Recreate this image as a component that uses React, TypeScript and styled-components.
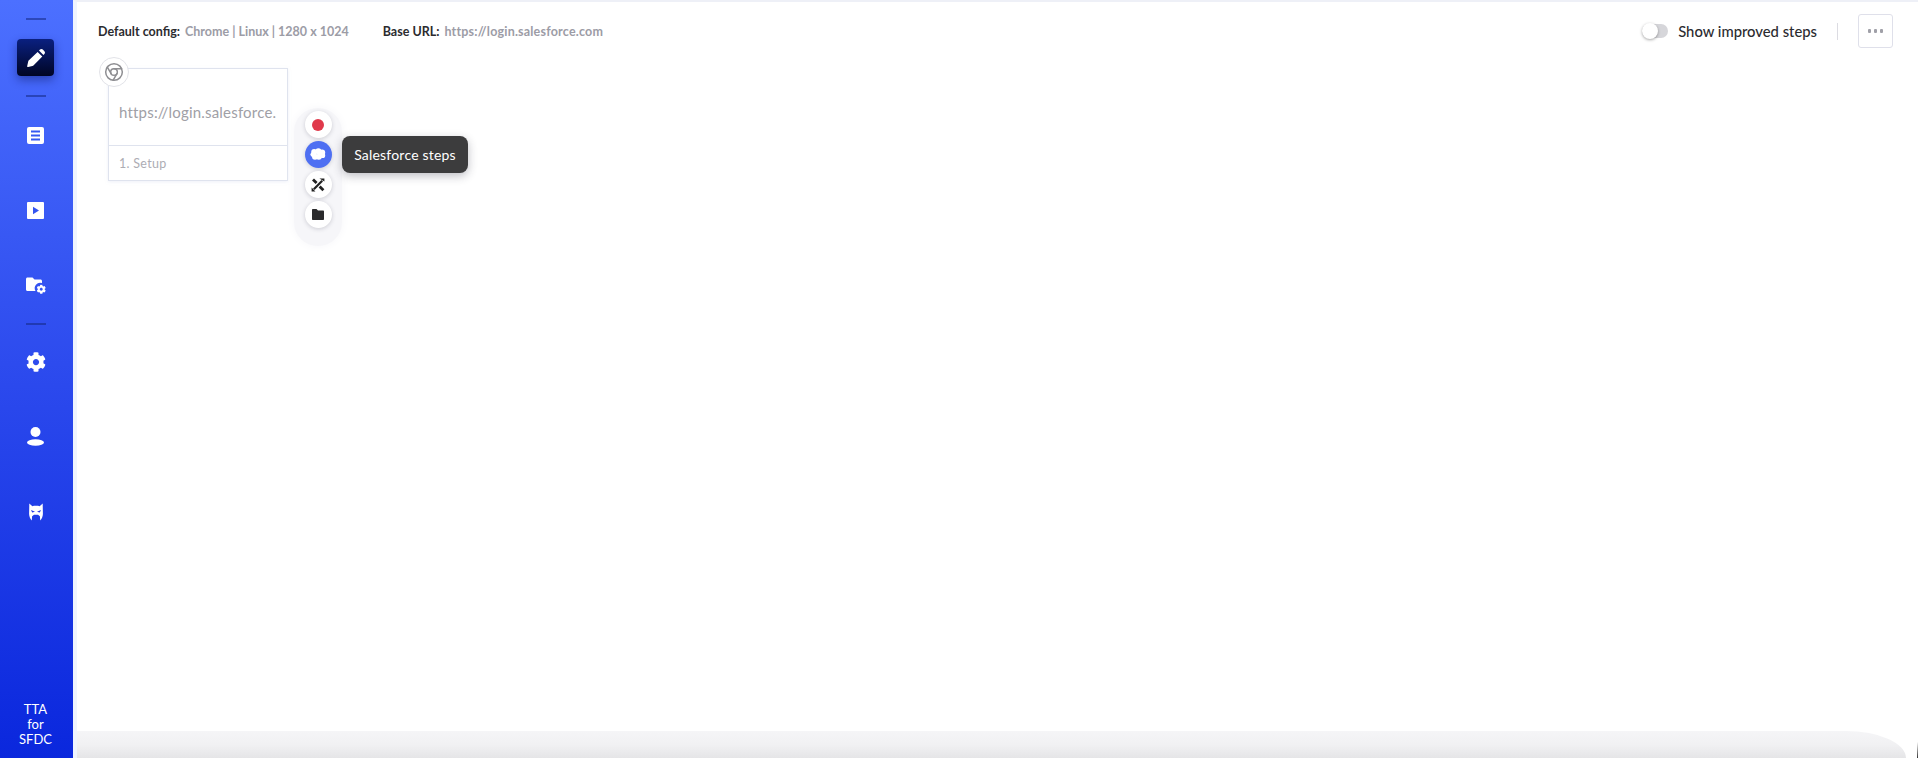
import React from 'react'
import styled, { createGlobalStyle } from 'styled-components'
import { FaCog } from 'react-icons/fa'
import { Chrome } from 'lucide-react'

const GlobalStyle = createGlobalStyle`
    html, body, #root { margin: 0; height: 100%; }
    body { font-family: Lato, "Open Sans", sans-serif; background: #fff; overflow: hidden; }
`

const Page = styled.div`
    display: flex;
    height: 100vh;
`

const Sidebar = styled.nav`
    width: 73px;
    flex-shrink: 0;
    display: flex;
    flex-direction: column;
    align-items: center;
    padding: 18px 2px 0 0;
    box-sizing: border-box;
    background: linear-gradient(180deg, #4c70ff 0%, #2d4bee 48%, #0a27dd 100%);
`

const NavDivider = styled.div<{ $gapBelow?: number }>`
    width: 20px;
    height: 2px;
    flex-shrink: 0;
    margin-bottom: ${ p => p.$gapBelow || 0 }px;
    background: rgba(20, 40, 130, 0.55);
`

const NavSlot = styled.div<{ $height?: number }>`
    width: 100%;
    height: ${ p => p.$height || 75 }px;
    flex-shrink: 0;
    display: flex;
    align-items: center;
    justify-content: center;
    color: #fff;
`

const ActiveButton = styled.div`
    width: 37px;
    height: 37px;
    display: flex;
    align-items: center;
    justify-content: center;
    border-radius: 4px;
    background: linear-gradient(180deg, #0a2080 0%, #000524 100%);
    box-shadow: 0 4px 10px rgba(10, 20, 90, 0.45);
`

const NavFooter = styled.div`
    margin-top: auto;
    padding-bottom: 11px;
    color: #fff;
    font-size: 13px;
    line-height: 15px;
    text-align: center;
`

const Main = styled.main`
    flex: 1;
    min-width: 0;
    display: flex;
    flex-direction: column;
    border-left: 4px solid #eff4fe;
    border-top: 2px solid #eef0f7;
`

const Header = styled.header`
    height: 60px;
    flex-shrink: 0;
    display: flex;
    align-items: flex-start;
    padding: 12px 25px 0 21px;
    box-sizing: border-box;
`

const ConfigGroup = styled.div`
    display: flex;
    gap: 5px;
    height: 34px;
    align-items: center;
    margin-right: 34px;
    font-size: 12.5px;
    font-weight: 700;
`

const ConfigLabel = styled.span`
    color: #2b2b2f;
`

const ConfigValue = styled.span<{ $spacing?: number }>`
    color: #9c9ca6;
    letter-spacing: ${ p => p.$spacing || 0 }px;
`

const HeaderRight = styled.div`
    margin-left: auto;
    display: flex;
    align-items: center;
    height: 34px;
`

const Toggle = styled.div`
    position: relative;
    width: 26px;
    height: 14px;
    border-radius: 7px;
    background: #d6d6da;
    margin-right: 10px;
`

const ToggleKnob = styled.div`
    position: absolute;
    left: 0;
    top: -1px;
    width: 16px;
    height: 16px;
    border-radius: 50%;
    background: #fff;
    box-shadow: 0 1px 3px rgba(0, 0, 0, 0.35);
`

const ToggleLabel = styled.span`
    font-size: 14.8px;
    font-weight: 500;
    color: #2b2b2f;
`

const HeaderDivider = styled.div`
    width: 1px;
    height: 17px;
    background: #dcdce2;
    margin: 0 20px;
`

const MoreButton = styled.div`
    width: 35px;
    height: 34px;
    box-sizing: border-box;
    border: 1px solid #dfe0ea;
    border-radius: 3px;
    display: flex;
    align-items: center;
    justify-content: center;
    gap: 2.5px;
`

const MoreDot = styled.span`
    width: 3.5px;
    height: 3.5px;
    background: #a0a0a8;
    border-radius: 1px;
`

const Canvas = styled.div`
    position: relative;
    flex: 1;
`

const StepCard = styled.div`
    position: absolute;
    left: 31px;
    top: 6px;
    width: 180px;
    height: 113px;
    box-sizing: border-box;
    border: 1px solid #dfe3ee;
    box-shadow: 0 1px 3px rgba(210, 216, 235, 0.35);
    background: #fff;
    display: flex;
    flex-direction: column;
`

const StepBody = styled.div`
    flex: 1;
    display: flex;
    align-items: center;
    padding: 10px 0 0 10px;
    white-space: nowrap;
    font-size: 15px;
    letter-spacing: 0.2px;
    color: #a0a0a6;
`

const StepFooter = styled.div`
    height: 34px;
    flex-shrink: 0;
    display: flex;
    align-items: center;
    padding-left: 10px;
    border-top: 1px solid #dfe3ee;
    font-size: 12.5px;
    letter-spacing: 0.3px;
    color: #adadb4;
`

const BrowserBadge = styled.div`
    position: absolute;
    left: -10px;
    top: -12px;
    width: 30px;
    height: 30px;
    box-sizing: border-box;
    border: 1px solid #e2e3e8;
    border-radius: 50%;
    background: #fff;
    color: #8e8e92;
    display: flex;
    align-items: center;
    justify-content: center;
`

const ActionStack = styled.div`
    position: absolute;
    left: 217px;
    top: 46px;
    width: 48px;
    height: 138px;
    box-sizing: border-box;
    padding-top: 3px;
    border-radius: 24px;
    background: #f6f6f9;
    box-shadow: 0 0 10px #f6f6f9;
    display: flex;
    flex-direction: column;
    align-items: center;
    gap: 3px;
`

const ActionButton = styled.div<{ $active?: boolean }>`
    width: 27px;
    height: 27px;
    border-radius: 50%;
    display: flex;
    align-items: center;
    justify-content: center;
    background: ${ p => p.$active ? '#4e6ff2' : '#fff' };
    box-shadow: 0 1px 4px rgba(60, 60, 80, 0.22);
`

const RecordDot = styled.span`
    width: 12px;
    height: 12px;
    border-radius: 50%;
    background: #e0394b;
`

const Tooltip = styled.div`
    position: absolute;
    left: 265px;
    top: 74px;
    width: 126px;
    height: 37px;
    border-radius: 8px;
    background: #3c3c3d;
    color: #fff;
    font-size: 14px;
    letter-spacing: 0.2px;
    display: flex;
    align-items: center;
    justify-content: center;
    box-shadow: 0 3px 10px rgba(40, 40, 60, 0.3);
`

const BottomRow = styled.div`
    position: relative;
    height: 27px;
    flex-shrink: 0;
    padding-right: 12px;
    &::after {
        content: '';
        position: absolute;
        right: 0;
        top: 0;
        width: 1px;
        height: 100%;
        background: linear-gradient(180deg, #fff 40%, #333 100%);
    }
`

const BottomBand = styled.div`
    height: 100%;
    border-top-right-radius: 60px 27px;
    background: linear-gradient(180deg, #f5f5f7 0%, #f1f1f3 50%, #e5e5e7 100%);
`

const PencilIcon = () => (
    <svg width="18" height="18" viewBox="0 0 18 18" fill="#fff">
        <path d="M10.6 2.9 L15.3 7.6 L6.7 16.2 C6.3 16.6 5.9 16.8 5.4 16.9 L1.1 17.9 C0.5 18 0 17.5 0.2 16.9 L1.2 12.6 C1.3 12.1 1.5 11.7 1.9 11.3 Z" />
        <path d="M12 1.6 L13 0.6 C13.8 -0.2 15 -0.2 15.8 0.6 L17.4 2.2 C18.2 3 18.2 4.2 17.4 5 L16.4 6 Z" />
    </svg>
)

const DocIcon = () => (
    <svg width="17" height="17" viewBox="0 0 17 17">
        <rect width="17" height="17" rx="2" fill="#fff" />
        <path d="M4 4.5h9M4 8.5h9M4 12.5h9" stroke="#3558f2" strokeWidth="2" />
    </svg>
)

const PlayIcon = () => (
    <svg width="17" height="17" viewBox="0 0 17 17">
        <rect width="17" height="17" rx="1" fill="#fff" />
        <path d="M6 4.8 L12 8.5 L6 12.2 Z" fill="#3354f0" />
    </svg>
)

const FolderGearIcon = () => (
    <svg width="20" height="17" viewBox="0 0 20 17">
        <path d="M1.5 0.5 H6.5 L8.5 2.5 H14.5 C15.3 2.5 16 3.2 16 4 V6 A5.5 5.5 0 0 0 9.5 14 H1.5 C0.7 14 0 13.3 0 12.5 V2 C0 1.2 0.7 0.5 1.5 0.5 Z" fill="#fff" />
        <g transform="translate(10.5 7.5)" fill="#fff">
            <FaCog size={9.5} />
        </g>
    </svg>
)

const UserIcon = () => (
    <svg width="17" height="19" viewBox="0 0 17 19" fill="#fff">
        <circle cx="8.5" cy="5" r="5" />
        <ellipse cx="8.5" cy="15.5" rx="8.5" ry="3.2" />
    </svg>
)

const MaskIcon = () => (
    <svg width="14" height="18" viewBox="0 0 14 18">
        <path d="M0.3 0.5 L3.4 3.2 C5 2.7 9 2.7 10.6 3.2 L13.7 0.5 L13.9 11 C13.9 13.5 12.6 16 11.2 17.5 L10.9 13.2 L9 11.8 H5 L3.1 13.2 L2.8 17.5 C1.4 16 0.1 13.5 0.1 11 Z" fill="#fff" />
        <path d="M2 7 L6 8.8 L3.2 9.5 Z M12 7 L8 8.8 L10.8 9.5 Z" fill="#2236e6" />
    </svg>
)

const CloudIcon = () => (
    <svg width="16" height="13" viewBox="0 0 16 13" fill="#fff">
        <circle cx="4.2" cy="4" r="3" />
        <circle cx="8.4" cy="3.2" r="3" />
        <circle cx="12" cy="4.6" r="3.2" />
        <circle cx="12.6" cy="7.4" r="2.6" />
        <circle cx="8.8" cy="8.8" r="3" />
        <circle cx="5" cy="8.8" r="3" />
        <circle cx="2.8" cy="6.6" r="2.4" />
    </svg>
)

const ToolsIcon = () => (
    <svg width="14" height="14" viewBox="0 0 14 14" fill="#222" stroke="#222">
        <path d="M2 1.5 L5.6 5.1 M8.6 8.4 L12.4 12.2" strokeWidth="2.8" />
        <path d="M11.2 2.8 L2.8 11.2" strokeWidth="2.2" />
        <path d="M8.4 0.6 H13.4 V3.6 Z M0.6 9.6 L4.4 13.4 H0.6 Z" strokeWidth="0" />
    </svg>
)

const FolderIcon = () => (
    <svg width="12" height="11" viewBox="0 0 12 11" fill="#2a2a2c">
        <path d="M0 1 C0 0.4 0.4 0 1 0 H4.5 L6 1.5 H11 C11.6 1.5 12 1.9 12 2.5 V10 C12 10.6 11.6 11 11 11 H1 C0.4 11 0 10.6 0 10 Z" />
    </svg>
)

export default function App() {
    return (
        <Page>
            <GlobalStyle />
            <Sidebar>
                <NavDivider />
                <NavSlot><ActiveButton><PencilIcon /></ActiveButton></NavSlot>
                <NavDivider $gapBelow={1} />
                <NavSlot><DocIcon /></NavSlot>
                <NavSlot><PlayIcon /></NavSlot>
                <NavSlot><FolderGearIcon /></NavSlot>
                <NavDivider />
                <NavSlot $height={74}><FaCog size={20} /></NavSlot>
                <NavSlot><UserIcon /></NavSlot>
                <NavSlot><MaskIcon /></NavSlot>
                <NavFooter>TTA<br />for<br />SFDC</NavFooter>
            </Sidebar>
            <Main>
                <Header>
                    <ConfigGroup>
                        <ConfigLabel>Default config:</ConfigLabel>
                        <ConfigValue>Chrome | Linux | 1280 x 1024</ConfigValue>
                    </ConfigGroup>
                    <ConfigGroup>
                        <ConfigLabel>Base URL:</ConfigLabel>
                        <ConfigValue $spacing={0.2}>https://login.salesforce.com</ConfigValue>
                    </ConfigGroup>
                    <HeaderRight>
                        <Toggle><ToggleKnob /></Toggle>
                        <ToggleLabel>Show improved steps</ToggleLabel>
                        <HeaderDivider />
                        <MoreButton><MoreDot /><MoreDot /><MoreDot /></MoreButton>
                    </HeaderRight>
                </Header>
                <Canvas>
                    <StepCard>
                        <BrowserBadge><Chrome size={20} strokeWidth={1.8} /></BrowserBadge>
                        <StepBody>https://login.salesforce.</StepBody>
                        <StepFooter>1. Setup</StepFooter>
                    </StepCard>
                    <ActionStack>
                        <ActionButton><RecordDot /></ActionButton>
                        <ActionButton $active><CloudIcon /></ActionButton>
                        <ActionButton><ToolsIcon /></ActionButton>
                        <ActionButton><FolderIcon /></ActionButton>
                    </ActionStack>
                    <Tooltip>Salesforce steps</Tooltip>
                </Canvas>
                <BottomRow><BottomBand /></BottomRow>
            </Main>
        </Page>
    )
}
